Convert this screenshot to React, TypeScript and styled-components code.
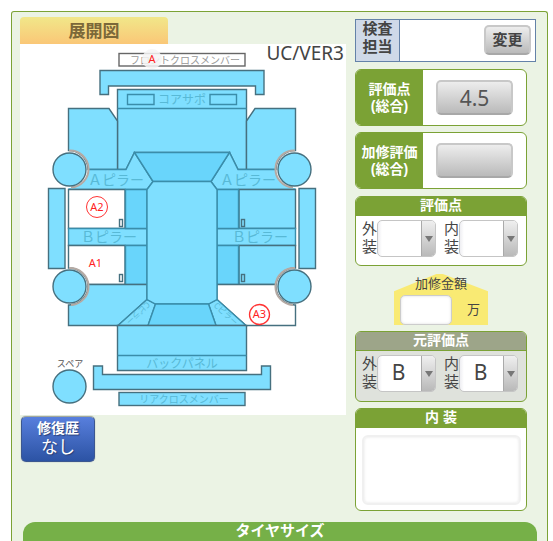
import React from "react";
import styled, { createGlobalStyle } from "styled-components";

const JP = `"Liberation Sans", "Noto Sans CJK JP", sans-serif`;

const Global = createGlobalStyle`
  * { box-sizing: border-box; }
  body {
    margin: 0;
    background: #fff;
    color: #444;
    font-family: "Noto Sans", "Noto Sans CJK JP", sans-serif;
  }
  button, input, select, textarea { font: inherit; color: inherit; margin: 0; }
`;

const Sheet = styled.main`
  margin: 11px 5px 0 11px;
  padding: 5px 0 0;
  height: calc(100vh - 11px);
  overflow: hidden;
  border: 1px solid #7ba235;
  border-bottom: 0;
  border-radius: 3px 3px 0 0;
  background: #ebf3e4;
`;

const Columns = styled.div`
  display: grid;
  grid-template-columns: minmax(0, 326fr) minmax(0, 181fr);
  gap: 9px;
  padding: 0 11px 0 8px;
`;

const Tab = styled.h2`
  width: 148px;
  height: 27px;
  margin: 0;
  border-radius: 4px 4px 0 0;
  background: linear-gradient(#f1e789, #fac777);
  color: #7b6839;
  font: 700 17px/29px ${JP};
  text-align: center;
`;

const Diagram = styled.div`
  position: relative;
  background: #fff;
`;

const Version = styled.span`
  position: absolute;
  top: -3px;
  right: 2px;
  font-size: 19px;
  line-height: 24px;
`;

const Car = styled.svg`
  display: block;
  width: 100%;
  height: auto;
  font-family: "Noto Sans CJK JP", sans-serif;
`;

const RepairHistory = styled.button`
  display: block;
  width: 74px;
  height: 46px;
  margin: 1px 0 0 1px;
  padding: 0 0 3px;
  border: 1px solid #3c5790;
  border-top-color: #a3a89c;
  border-radius: 5px;
  background: linear-gradient(#587fdd, #2c53a4);
  box-shadow: 0 0 1px #5c6f92;
  color: #fff;
  font: 400 17px/19px ${JP};
  text-shadow: 1px 1px 1px #2a4078;
`;

const RepairTitle = styled.strong`
  display: block;
  font-size: 14px;
`;

const Side = styled.div`
  display: flex;
  flex-direction: column;
  padding-top: 2px;
`;

const Inspector = styled.section`
  display: flex;
  height: 43px;
  border: 1px solid #6482a8;
  background: #fff;
`;

const InspectorTitle = styled.h3`
  width: 44px;
  margin: 0;
  border-right: 1px solid #6482a8;
  background: #cfd9e8;
  font: 700 15px/18px ${JP};
  text-align: center;
`;

const Button = styled.button<{ $small?: boolean }>`
  width: ${(p) => (p.$small ? 47 : 77)}px;
  height: ${(p) => (p.$small ? 30 : 35)}px;
  margin: ${(p) => (p.$small ? "5px 4px 0 auto" : "0 auto")};
  padding: 0;
  border: 2px solid #c8c8c8;
  border-bottom-color: #a8a8a8;
  border-radius: 5px;
  background: linear-gradient(#ededed, #bababa);
  color: ${(p) => (p.$small ? "#444" : "#555")};
  font: ${(p) => (p.$small ? `700 15px/20px ${JP}` : `400 21px/24px "Noto Sans", sans-serif`)};
`;

const Card = styled.section<{ $tone?: string; $gap: number; $height: number }>`
  display: flex;
  flex-direction: column;
  min-height: ${(p) => p.$height}px;
  margin: ${(p) => p.$gap}px 9px 0 0;
  border: 1px solid #7ba235;
  border-radius: 6px;
  overflow: hidden;
  background: ${(p) => p.$tone ?? "#fff"};
`;

const ScoreCard = styled(Card)`
  flex-direction: row;
`;

const ScoreTitle = styled.h3`
  display: flex;
  align-items: center;
  justify-content: center;
  width: 67px;
  margin: 0;
  background: #7ba235;
  color: #fff;
  font: 700 14px/17px ${JP};
  text-align: center;
`;

const ScoreBody = styled.div`
  display: flex;
  flex: 1;
  align-items: center;
`;

const CardTitle = styled.h3<{ $muted?: boolean }>`
  height: 20px;
  margin: -1px -1px 0;
  background: ${(p) => (p.$muted ? "#9da589" : "#7ba235")};
  border-bottom: 1px solid #7ba235;
  color: #fff;
  font: 700 14px/18px ${JP};
  text-align: center;
`;

const Grades = styled.div`
  display: grid;
  grid-template-columns: 1fr 1fr;
  gap: 8px;
  padding: 4px 8px 0 6px;
`;

const Grade = styled.label`
  display: flex;
  font: 400 15px/18px ${JP};
`;

const GradeName = styled.span`
  width: 15px;
`;

const SelectBox = styled.span`
  position: relative;
  display: block;
  flex: 1;
  height: 37px;
  border: 1px solid #c5c5c5;
  border-radius: 5px;
  overflow: hidden;
  background: linear-gradient(90deg, #eeeef2, #fff 4px);
`;

const Select = styled.select`
  appearance: none;
  width: 100%;
  height: 100%;
  padding: 0 16px 4px 0;
  border: 0;
  background: transparent;
  font: 400 21px/28px "Noto Sans", sans-serif;
  text-align: center;
  text-align-last: center;
`;

const Arrow = styled.span`
  position: absolute;
  inset: 0 0 0 auto;
  display: grid;
  place-items: center;
  width: 14px;
  border-left: 1px solid #aaa;
  background: linear-gradient(#efefef, #b9b9b9);
  pointer-events: none;
`;

const House = styled.div`
  position: relative;
  z-index: 0;
  display: flex;
  flex-direction: column;
  width: 94px;
  height: 51px;
  margin: 8px 0 0 39px;

  &::before {
    content: "";
    position: absolute;
    inset: 0;
    z-index: -1;
    background: #f9ea73;
    clip-path: polygon(45% 0, 52% 0, 100% 34%, 100% 100%, 0 100%, 0 34%);
  }
`;

const HouseTitle = styled.label`
  font: 400 13px/20px ${JP};
  text-align: center;
`;

const Amount = styled.div`
  display: flex;
  align-items: center;
  gap: 15px;
  padding: 1px 6px 0;
  font: 400 13px/28px ${JP};
`;

const AmountInput = styled.input`
  width: 52px;
  height: 30px;
  border: 1px solid #ccc;
  border-radius: 5px;
  background: #fff;
  box-shadow: inset 0 0 3px #ddd;
`;

const Notes = styled.textarea`
  height: 70px;
  margin: 7px 5px 5px 6px;
  border: 2px solid #f0f0f0;
  border-radius: 6px;
  box-shadow: inset 0 0 3px #e4e4e4;
  background: #fff;
  resize: none;
`;

const TireTitle = styled.h2`
  height: 40px;
  margin: 11px 10px 0 11px;
  border-radius: 12px 12px 0 0;
  background: #76b048;
  color: #fff;
  font: 700 15px/18px ${JP};
  text-align: center;
`;

const BLUE = "#7fdfff";
const DARK = "#69d5fb";
const LINE = "#3a8daa";
const EDGE = "#46707f";
const FAINT = "#58b9d6";

function SidePanels({ right }: { right?: boolean }) {
  const door = right ? BLUE : "#fff";
  return (
    <g transform={right ? "translate(364 0) scale(-1 1)" : undefined} stroke={EDGE}>
      <path fill={BLUE} d="M68.5 150.5V108.5H109L117.5 121V169.5H88A19 19 0 0 0 68.5 150.5Z" />
      <path fill={BLUE} stroke="none" d="M88 169.5H126L134.5 152.5L153 181.5L147 189.5H68.5V188A19 19 0 0 0 88 169.5Z" />
      <path fill="none" stroke={LINE} d="M88 169.5H126L134.5 152.5L153 181.5L147 189.5H68.5" />
      <path fill={door} d="M68.5 189.5H125V228.5H68.5Z" />
      <path fill={BLUE} stroke={LINE} d="M68.5 228.5H147V245.5H68.5Z" />
      <path fill={door} d="M68.5 245.5H125V284.5H88A19 19 0 0 0 68.5 268Z" />
      <path fill={DARK} stroke={LINE} d="M125.5 189.5H147V228.5H125.5ZM125.5 245.5H147V284.5H125.5Z" />
      <rect x="119.5" y="219.5" width="3" height="7" fill="none" />
      <rect x="119.5" y="274.5" width="3" height="7" fill="none" />
      <path fill={right ? "#fff" : BLUE} d="M88 284.5H147V299.5L118 325.5H68.5V305A19 19 0 0 0 88 284.5Z" />
      <path fill={BLUE} stroke={LINE} d="M147 299.5L155.5 304L148 325.5H118Z" />
      <path fill={BLUE} d="M48.5 188.5H65V268.5H48.5Z" />
      <path fill="none" stroke="#b5aaa4" strokeWidth="2" d="M69 150.5A18.5 18.5 0 0 1 71 187.5M69 268A18.5 18.5 0 0 1 71 305" />
      <circle cx="69.5" cy="169.5" r="16.5" fill={BLUE} />
      <circle cx="69.5" cy="286.5" r="16.5" fill={BLUE} />
    </g>
  );
}

function CarDiagram() {
  return (
    <Car viewBox="20 44 326 371" role="img" aria-label="展開図">
      <g strokeWidth="1.4">
        <rect x="119" y="53.5" width="126" height="12.5" fill="#fff" stroke="#666" />
        <path fill={BLUE} stroke={EDGE} d="M100 70.5H264V94.5H255.5V86H108.5V94.5H100Z" />
        <path fill={BLUE} stroke={EDGE} d="M117.5 89.5H246.5V169.5H238L229.5 152.5H134.5L126 169.5H117.5Z" />
        <path fill={BLUE} stroke={LINE} d="M117.5 108.5H246.5M127.5 94.5H154V104.5H127.5ZM210 94.5H236.5V104.5H210Z" />
        <SidePanels />
        <SidePanels right />
        <path fill={DARK} stroke={LINE} d="M134.5 152.5H229.5L211 181.5H153Z" />
        <path fill={BLUE} stroke={LINE} d="M153 181.5H211L217 189.5V299.5L208.5 304H155.5L147 299.5V189.5Z" />
        <path fill={DARK} stroke={LINE} d="M155.5 304H208.5L216 325.5H148Z" />
        <path fill={BLUE} stroke={EDGE} d="M117.5 325.5H246.5V370.5H117.5Z" />
        <path stroke={LINE} d="M117.5 355.5H246.5" />
        <path fill={BLUE} stroke={EDGE} d="M93.5 366H102.5V374.5H261.5V366H270.5V389.5H93.5Z" />
        <rect x="119" y="392.5" width="126" height="13" fill={BLUE} stroke={EDGE} />
        <circle cx="69.5" cy="386.5" r="16.5" fill={BLUE} stroke={EDGE} />
      </g>
      <g fill={FAINT} textAnchor="middle" fontSize="12">
        <text x="185" y="64" fill="#999" fontSize="10">フロントクロスメンバー</text>
        <text x="182" y="104">コアサポ</text>
        <text x="116" y="185" fontSize="14">Ａピラー</text>
        <text x="248" y="185" fontSize="14">Ａピラー</text>
        <text x="109" y="242" fontSize="14">Ｂピラー</text>
        <text x="260" y="242" fontSize="14">Ｂピラー</text>
        <text x="182" y="368">バックパネル</text>
        <text x="184" y="403" fontSize="10">リアクロスメンバー</text>
        <text x="70" y="367" fontSize="9" fill="#555">スペア</text>
        <text transform="translate(136 311) rotate(138)" fontSize="8">Cピラー</text>
        <text transform="translate(224 316) rotate(42)" fontSize="8">Cピラー</text>
      </g>
      <circle cx="152" cy="59" r="10" fill="#f4f4f4" fillOpacity="0.85" />
      <g fill="none" stroke="#f33">
        <circle cx="97" cy="207" r="10.5" />
        <circle cx="259.5" cy="314.5" r="10" strokeWidth="1.3" />
      </g>
      <g fill="#f22" textAnchor="middle" fontSize="11" fontFamily="Noto Sans, sans-serif">
        <text x="152" y="63">A</text>
        <text x="97" y="211">A2</text>
        <text x="95.5" y="267">A1</text>
        <text x="259.5" y="318">A3</text>
      </g>
    </Car>
  );
}

function GradeSelect({ name, value }: { name: [string, string]; value: string }) {
  return (
    <Grade>
      <GradeName>{name[0]}<br />{name[1]}</GradeName>
      <SelectBox>
        <Select defaultValue={value} aria-label={name.join("")}>
          <option value={value}>{value}</option>
        </Select>
        <Arrow>
          <svg width="8" height="6" viewBox="0 0 8 6"><path d="M0 0H8L4 6Z" fill="#777" /></svg>
        </Arrow>
      </SelectBox>
    </Grade>
  );
}

export default function App() {
  return (
    <>
      <Global />
      <Sheet>
        <Columns>
          <div>
            <Tab>展開図</Tab>
            <Diagram>
              <CarDiagram />
              <Version>UC/VER3</Version>
            </Diagram>
            <RepairHistory><RepairTitle>修復歴</RepairTitle>なし</RepairHistory>
          </div>
          <Side>
            <Inspector>
              <InspectorTitle>検査<br />担当</InspectorTitle>
              <Button $small>変更</Button>
            </Inspector>
            <ScoreCard $gap={7} $height={57}>
              <ScoreTitle>評価点<br />(総合)</ScoreTitle>
              <ScoreBody><Button>4.5</Button></ScoreBody>
            </ScoreCard>
            <ScoreCard $gap={6} $height={57}>
              <ScoreTitle>加修評価<br />(総合)</ScoreTitle>
              <ScoreBody><Button aria-label="加修評価" /></ScoreBody>
            </ScoreCard>
            <Card $gap={7} $height={70}>
              <CardTitle>評価点</CardTitle>
              <Grades>
                <GradeSelect name={["外", "装"]} value="" />
                <GradeSelect name={["内", "装"]} value="" />
              </Grades>
            </Card>
            <House>
              <HouseTitle htmlFor="amount">加修金額</HouseTitle>
              <Amount><AmountInput id="amount" />万</Amount>
            </House>
            <Card $gap={6} $height={71} $tone="#dfe2dc">
              <CardTitle $muted>元評価点</CardTitle>
              <Grades>
                <GradeSelect name={["外", "装"]} value="B" />
                <GradeSelect name={["内", "装"]} value="B" />
              </Grades>
            </Card>
            <Card $gap={6} $height={103}>
              <CardTitle as="label" htmlFor="notes">内 装</CardTitle>
              <Notes id="notes" />
            </Card>
          </Side>
        </Columns>
        <TireTitle>タイヤサイズ</TireTitle>
      </Sheet>
    </>
  );
}
